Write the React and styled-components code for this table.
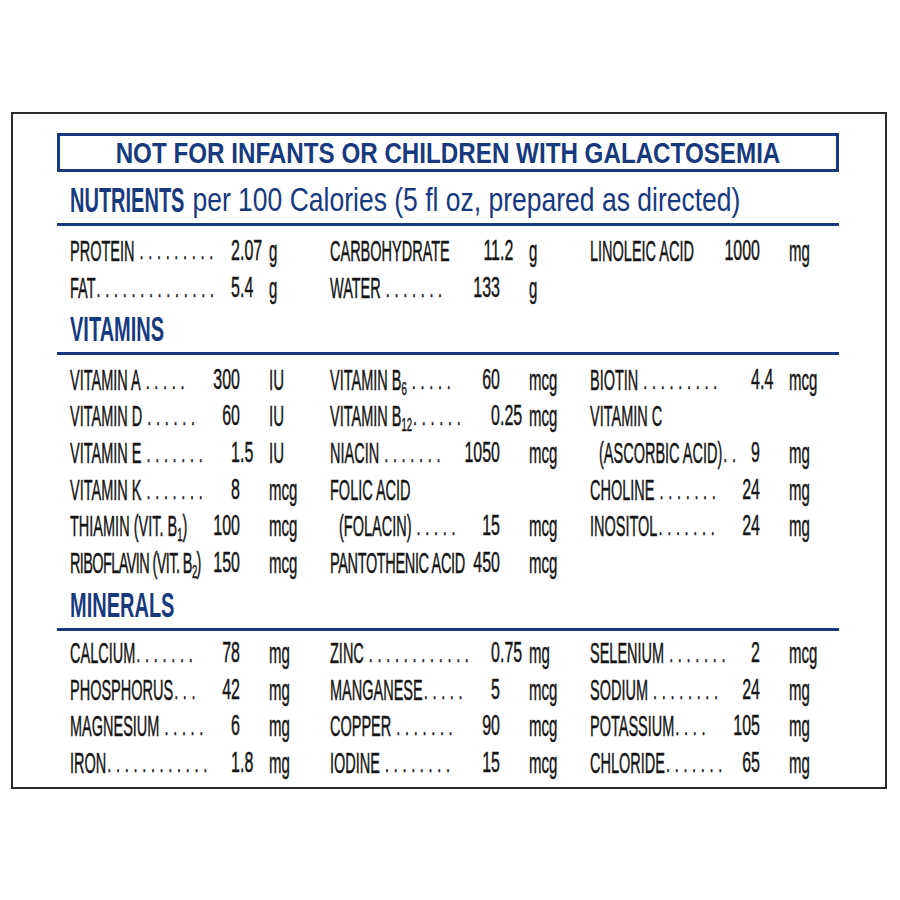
import React from "react";
import styled, { createGlobalStyle, css } from "styled-components";

const NAVY = "#173a7f";
const INK = "#161616";
const FONT = `"Liberation Sans", Arial, sans-serif`;
const ROW_H = 36.7;
const VALUE_SIZE = 16;

const Global = createGlobalStyle`
  html, body { margin: 0; padding: 0; background: #fff; }
  body { font-family: ${FONT}; }
`;

const Page = styled.div`
  width: 900px;
  height: 900px;
  box-sizing: border-box;
  padding: 112px 0 0 11px;
  background: #fff;
`;

const Frame = styled.div`
  box-sizing: border-box;
  width: 876px;
  height: 677px;
  border: 2px solid #2b2b2b;
  padding: 19px 0 0 44px;
`;

const Panel = styled.div`
  width: 782px;
`;

const Warning = styled.div`
  box-sizing: border-box;
  height: 39px;
  border: 3px solid ${NAVY};
  display: flex;
  align-items: center;
  justify-content: center;
`;

const squeezed = css`
  display: inline-block;
  white-space: nowrap;
  font-family: ${FONT};
  transform-origin: 50% 50%;
`;

const WarningText = styled.span`
  ${squeezed};
  font-size: 24.2px;
  font-weight: 700;
  line-height: 27px;
  color: ${NAVY};
  transform: scaleY(1.19);
`;

const Heading = styled.div`
  display: flex;
  align-items: center;
  gap: 8px;
  height: 46px;
  padding-left: 13px;
  border-bottom: 3px solid ${NAVY};
  margin-top: ${(p) => p.$mt || 0}px;
`;

const HeadBold = styled.span`
  ${squeezed};
  font-size: 20px;
  font-weight: 700;
  line-height: 24px;
  color: ${NAVY};
  transform: scaleY(1.76);
`;

const HeadLight = styled.span`
  ${squeezed};
  font-size: 26.5px;
  font-weight: 400;
  line-height: 30px;
  color: ${NAVY};
  transform: scaleY(1.27);
`;

const Grid = styled.div`
  display: grid;
  grid-template-columns: 260px 260px 262px;
  padding: ${(p) => p.$pt}px 0 0 13px;
`;

const Col = styled.div`
  display: flex;
  flex-direction: column;
`;

const Row = styled.div`
  display: flex;
  align-items: center;
  height: ${ROW_H}px;
`;

const Main = styled.div`
  display: flex;
  align-items: center;
  box-sizing: border-box;
  width: 170px;
  flex: none;
  padding-left: ${(p) => (p.$indent ? 9 : 0)}px;
`;

const bodyText = css`
  ${squeezed};
  line-height: 18px;
  color: ${INK};
  font-weight: 400;
  -webkit-text-stroke: 0.25px ${INK};
`;

const Label = styled.span`
  ${bodyText};
  flex: none;
  font-size: 14.5px;
  letter-spacing: ${(p) => p.$tight || 0}px;
  transform: scaleY(2);
`;

const Dots = styled.span`
  ${bodyText};
  flex: none;
  margin-left: ${(p) => (p.$flush ? 1 : 5)}px;
  font-size: 14.5px;
  letter-spacing: 4.7px;
  transform: scaleY(1.7);
`;

const Value = styled.span`
  ${bodyText};
  flex: none;
  margin-left: auto;
  margin-right: ${(p) => -p.$hang}px;
  font-size: ${VALUE_SIZE}px;
  transform: scaleY(1.83);
`;

const Unit = styled.span`
  ${bodyText};
  margin-left: 29px;
  font-size: 15px;
  transform: scaleY(1.95);
`;

const Sub = styled.sub`
  font-size: 9.5px;
  line-height: 1;
  vertical-align: -2.5px;
`;

const nutrients = [
  [
    { label: "PROTEIN", dots: 9, value: "2.07", unit: "g" },
    { label: "FAT", dots: 14, flush: true, value: "5.4", unit: "g" },
  ],
  [
    { label: "CARBOHYDRATE", value: "11.2", unit: "g" },
    { label: "WATER", dots: 7, value: "133", unit: "g" },
  ],
  [{ label: "LINOLEIC ACID", value: "1000", unit: "mg" }],
];

const vitamins = [
  [
    { label: "VITAMIN A", dots: 5, value: "300", unit: "IU" },
    { label: "VITAMIN D", dots: 6, value: "60", unit: "IU" },
    { label: "VITAMIN E", dots: 7, value: "1.5", unit: "IU" },
    { label: "VITAMIN K", dots: 7, value: "8", unit: "mcg" },
    {
      label: (
        <>
          THIAMIN (VIT. B<Sub>1</Sub>)
        </>
      ),
      value: "100",
      unit: "mcg",
    },
    {
      label: (
        <>
          RIBOFLAVIN (VIT. B<Sub>2</Sub>)
        </>
      ),
      tight: -0.6,
      value: "150",
      unit: "mcg",
    },
  ],
  [
    {
      label: (
        <>
          VITAMIN B<Sub>6</Sub>
        </>
      ),
      dots: 5,
      value: "60",
      unit: "mcg",
    },
    {
      label: (
        <>
          VITAMIN B<Sub>12</Sub>
        </>
      ),
      dots: 6,
      flush: true,
      value: "0.25",
      unit: "mcg",
    },
    { label: "NIACIN", dots: 7, value: "1050", unit: "mcg" },
    { label: "FOLIC ACID" },
    { label: "(FOLACIN)", indent: true, dots: 5, value: "15", unit: "mcg" },
    { label: "PANTOTHENIC ACID", tight: -0.35, value: "450", unit: "mcg" },
  ],
  [
    { label: "BIOTIN", dots: 9, value: "4.4", unit: "mcg" },
    { label: "VITAMIN C" },
    { label: "(ASCORBIC ACID)", indent: true, dots: 2, flush: true, value: "9", unit: "mg" },
    { label: "CHOLINE", dots: 7, value: "24", unit: "mg" },
    { label: "INOSITOL", dots: 7, flush: true, value: "24", unit: "mg" },
  ],
];

const minerals = [
  [
    { label: "CALCIUM", dots: 7, flush: true, value: "78", unit: "mg" },
    { label: "PHOSPHORUS", dots: 3, flush: true, value: "42", unit: "mg" },
    { label: "MAGNESIUM", dots: 5, value: "6", unit: "mg" },
    { label: "IRON", dots: 12, flush: true, value: "1.8", unit: "mg" },
  ],
  [
    { label: "ZINC", dots: 12, value: "0.75", unit: "mg" },
    { label: "MANGANESE", dots: 5, flush: true, value: "5", unit: "mcg" },
    { label: "COPPER", dots: 7, value: "90", unit: "mcg" },
    { label: "IODINE", dots: 8, value: "15", unit: "mcg" },
  ],
  [
    { label: "SELENIUM", dots: 7, value: "2", unit: "mcg" },
    { label: "SODIUM", dots: 8, value: "24", unit: "mg" },
    { label: "POTASSIUM", dots: 4, flush: true, value: "105", unit: "mg" },
    { label: "CHLORIDE", dots: 7, flush: true, value: "65", unit: "mg" },
  ],
];

// width of the decimal tail that hangs past the value column (Arial metrics)
const hangOf = (frac) =>
  frac ? (0.278 + 0.556 * frac.length) * VALUE_SIZE : 0;

function Item({ it }) {
  const [whole, frac] = it.value ? it.value.split(".") : [];
  return (
    <Row>
      <Main $indent={it.indent}>
        <Label $tight={it.tight}>{it.label}</Label>
        {it.dots ? <Dots $flush={it.flush}>{".".repeat(it.dots)}</Dots> : null}
        {it.value && (
          <Value $hang={hangOf(frac)}>
            {whole}
            {frac ? `.${frac}` : ""}
          </Value>
        )}
      </Main>
      {it.unit && <Unit>{it.unit}</Unit>}
    </Row>
  );
}

function Table({ cols, pt }) {
  return (
    <Grid $pt={pt}>
      {cols.map((col, i) => (
        <Col key={i}>
          {col.map((it, j) => (
            <Item key={j} it={it} />
          ))}
        </Col>
      ))}
    </Grid>
  );
}

export default function App() {
  return (
    <Page>
      <Global />
      <Frame>
        <Panel>
          <Warning>
            <WarningText>NOT FOR INFANTS OR CHILDREN WITH GALACTOSEMIA</WarningText>
          </Warning>
          <Heading $mt={5}>
            <HeadBold>NUTRIENTS</HeadBold>
            <HeadLight>per 100 Calories (5 fl oz, prepared as directed)</HeadLight>
          </Heading>
          <Table cols={nutrients} pt={7} />
          <Heading>
            <HeadBold>VITAMINS</HeadBold>
          </Heading>
          <Table cols={vitamins} pt={6} />
          <Heading>
            <HeadBold>MINERALS</HeadBold>
          </Heading>
          <Table cols={minerals} pt={4} />
        </Panel>
      </Frame>
    </Page>
  );
}
